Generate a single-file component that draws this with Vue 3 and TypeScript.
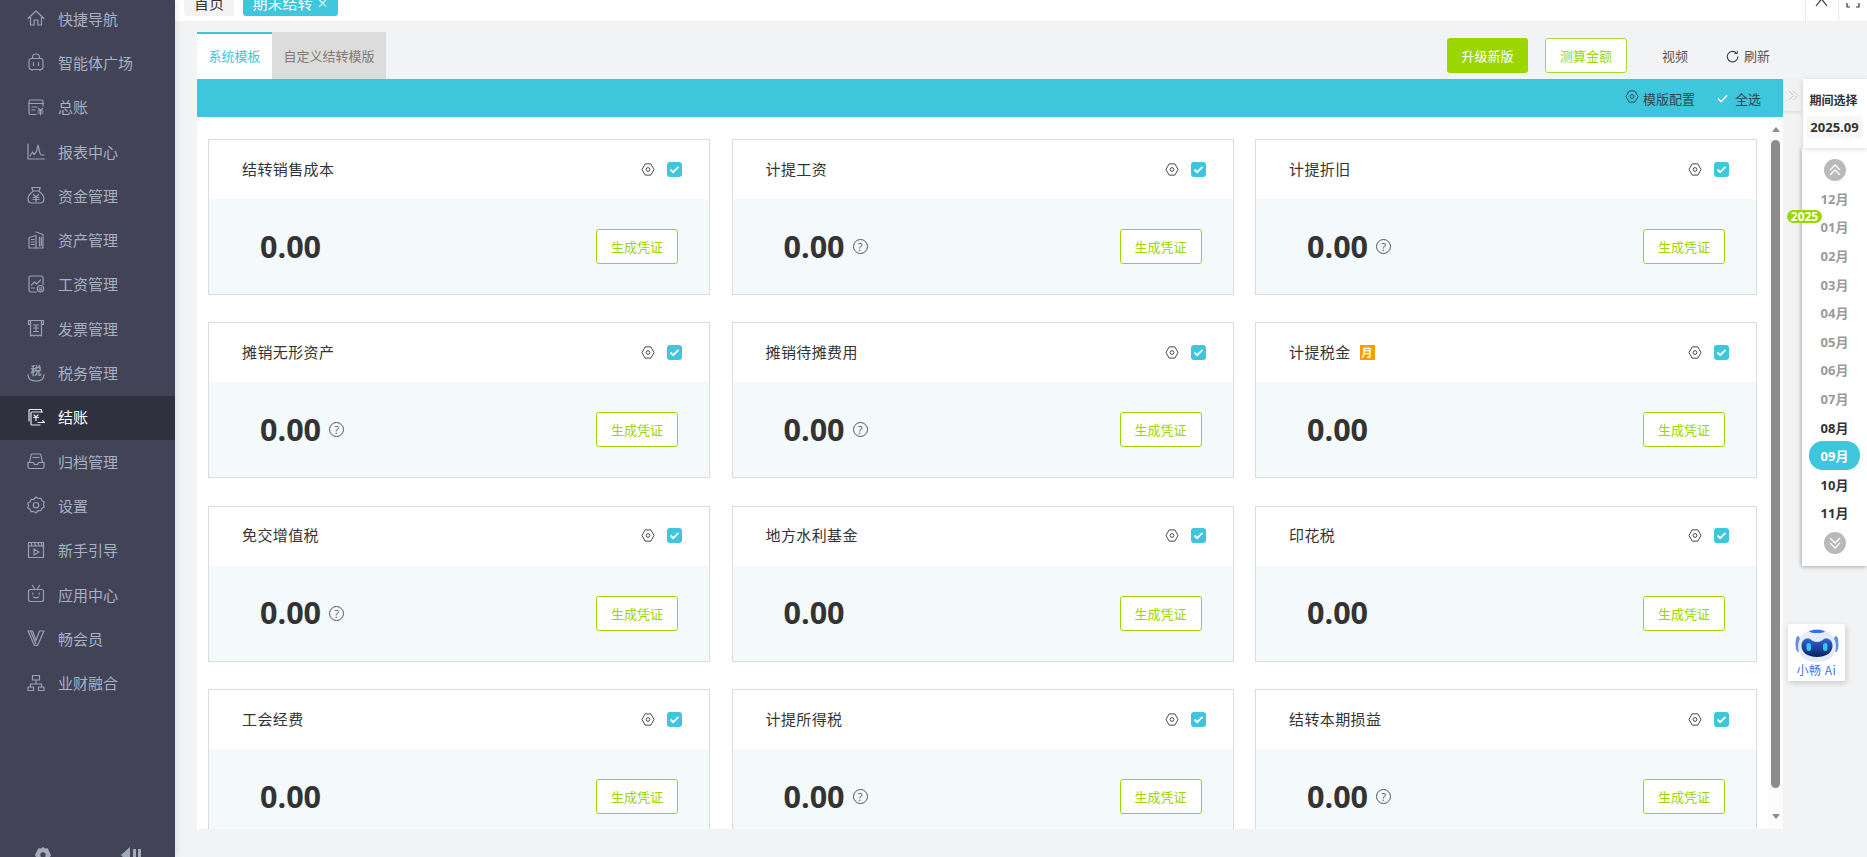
<script setup lang="ts">
interface MenuItem { label: string; paths: string[]; glyph?: string; active?: boolean }
interface Card { title: string; help?: boolean; monthly?: boolean }

const menu: MenuItem[] = [
  { label: '快捷导航', paths: ['M1 9.500 9 2l8 7.500', 'M3.500 8v8h3.600v-5h3.800v5h3.600V8'] },
  { label: '智能体广场', paths: ['M4.500 5.500h9a2.500 2.500 0 0 1 2.500 2.500v6a2.500 2.500 0 0 1-2.500 2.500h-9A2.500 2.500 0 0 1 2 14V8a2.500 2.500 0 0 1 2.500-2.500z', 'M5.500 5.500V4a3.500 3 0 0 1 7 0v1.500', 'M6.500 9.500v3M11.500 9.500v3', 'M5 16.500v1M13 16.500v1'] },
  { label: '总账', paths: ['M16 8V3.500A1.500 1.500 0 0 0 14.500 2h-11A1.500 1.500 0 0 0 2 3.500V15a1.500 1.500 0 0 0 1.500 1.500H9', 'M2 5.500h14', 'M5 9h5M5 12h3', 'M11.500 10.500l2 2 2-2M11 13h5M11 15h5M13.500 12.500v4.500'] },
  { label: '报表中心', paths: ['M1 2v15h16.500', 'M3 14l2.500-4 1.500 2.500 2.500-3L11 3l2 8.500 1 1.500h3'] },
  { label: '资金管理', paths: ['M6 5 4.800 1.500h8.400L12 5z', 'M6 5.500C3 7.500 1 10 1 13c0 2.500 1.500 4 4 4h8c2.500 0 4-1.500 4-4 0-3-2-5.500-5-7.500', 'M6.500 8.500 9 11l2.500-2.500M6 11.500h6M6 13.500h6M9 11v4.500'] },
  { label: '资产管理', paths: ['M2 6.500l7-2v12.500H2z', 'M9 1l7 2.500V17H9', 'M4.300 8.500h1M6.300 8.500h1M4.300 11h1M6.300 11h1M4.300 13.500h1M6.300 13.500h1', 'M12.500 6v9M14.300 6.500v8.500'] },
  { label: '工资管理', paths: ['M9.500 17H3.500A1.500 1.500 0 0 1 2 15.500v-13A1.500 1.500 0 0 1 3.500 1h11A1.500 1.500 0 0 1 16 2.500v7', 'M4.500 10l3-3 2 2 4-4', 'M4.500 13h3', 'M13.500 10.500a3.200 3.200 0 1 1 0 6.400 3.200 3.200 0 0 1 0-6.400zM12 13h3M12 14.800h3'] },
  { label: '发票管理', paths: ['M1.500 1.500h15v4h-2V1.500M1.500 1.500v4h2V1.500', 'M3.500 1.500v15.500l2-1 1.500 1 2-1 2 1 1.500-1 2 1V1.500', 'M6.500 6h5M6.500 9h5M6.500 12.500h5M9 6v6.500'] },
  { label: '税务管理', glyph: '税', paths: ['M1 10.500c0 4 3 6.500 8 6.500s8-2.500 8-6.500'] },
  { label: '结账', active: true, paths: ['M14.500 4V2.500a1 1 0 0 0-1-1H3a1 1 0 0 0-1 1V13', 'M15.500 4H5a1 1 0 0 0-1 1v11a1 1 0 0 0 1 1h8', 'M7 7l2 2 2-2M6.500 9.500h5M9 9v3.500', 'M11 14.500h6.500l-2-2'] },
  { label: '归档管理', paths: ['M1 10.500V15a1.500 1.500 0 0 0 1.500 1.500h13A1.500 1.500 0 0 0 17 15v-4.500', 'M1 10.500h5.500l1 2h3l1-2H17', 'M2.500 10.500 4 3a1.500 1.500 0 0 1 1.500-1h7A1.500 1.500 0 0 1 14 3l1.500 7.500', 'M6 5.500h6'] },
  { label: '设置', paths: ['M9 1l2.200 1.500 2.600-.2 1.200 2.400 2.200 1.300-.700 2.500.700 2.500-2.200 1.300-1.200 2.400-2.600-.2L9 17l-2.200-1.500-2.600.2L3 13.300 .800 12l.700-2.500L.800 7 3 5.700 4.200 3.300l2.600.2z', 'M9 6.500a2.700 2.700 0 1 1 0 5.400 2.700 2.700 0 0 1 0-5.400z'] },
  { label: '新手引导', paths: ['M1.500 1.500h15v15h-15z', 'M1.500 5h15', 'M4 1.500l1 3.500M7.500 1.500l1 3.500M11 1.500l1 3.500M14 1.500l1 3.500', 'M7 8v6l5-3z'] },
  { label: '应用中心', paths: ['M3.500 4.500h11a2 2 0 0 1 2 2v8a2 2 0 0 1-2 2h-11a2 2 0 0 1-2-2v-8a2 2 0 0 1 2-2z', 'M5.500.500 8 4.500M12.500.500 10 4.500', 'M5.800 8v1.200M12.200 8v1.200', 'M6.500 12c1 1.200 4 1.200 5 0'] },
  { label: '畅会员', paths: ['M1 2h4.500L9 11.500 12.500 2H17L10.500 16.500h-3z', 'M3.500 2 9 15'] },
  { label: '业财融合', paths: ['M5.500 1.500h7v4.500h-7z', 'M9 6v4M3.500 13v-3h11v3', 'M1 13h5.500v3.500H1zM11.500 13H17v3.500h-5.500z'] }
]

const cards: Card[] = [
  { title: '结转销售成本' },
  { title: '计提工资', help: true },
  { title: '计提折旧', help: true },
  { title: '摊销无形资产', help: true },
  { title: '摊销待摊费用', help: true },
  { title: '计提税金', monthly: true },
  { title: '免交增值税', help: true },
  { title: '地方水利基金' },
  { title: '印花税' },
  { title: '工会经费' },
  { title: '计提所得税', help: true },
  { title: '结转本期损益', help: true }
]

const months = [
  { label: '12月', state: 'past' },
  { label: '01月', state: 'past' },
  { label: '02月', state: 'past' },
  { label: '03月', state: 'past' },
  { label: '04月', state: 'past' },
  { label: '05月', state: 'past' },
  { label: '06月', state: 'past' },
  { label: '07月', state: 'past' },
  { label: '08月', state: 'open' },
  { label: '09月', state: 'current' },
  { label: '10月', state: 'open' },
  { label: '11月', state: 'open' }
]

// hexagonal cog outline shared by the card and toolbar gear icons
const gearOuter = 'M5.200 2.500h7.600L17 10l-4.200 7.500H5.200L1 10z'
</script>

<template>
  <div class="app">
    <aside class="side">
      <nav class="menu">
        <div v-for="item in menu" :key="item.label" class="menu-item" :class="{ active: item.active }">
          <svg class="menu-icon" viewBox="0 0 18 18" fill="none" stroke="currentColor" stroke-width="1.200" stroke-linecap="round" stroke-linejoin="round">
            <path v-for="d in item.paths" :key="d" :d="d" />
            <text v-if="item.glyph" x="9" y="10.500" text-anchor="middle" font-size="11" font-weight="700" fill="currentColor" stroke="none">{{ item.glyph }}</text>
          </svg>
          <span>{{ item.label }}</span>
        </div>
      </nav>
      <div class="side-foot">
        <svg class="foot-gear" viewBox="0 0 18 18">
          <path fill="#a3abb8" fill-rule="evenodd" d="M9 0l2.400 1.700 2.900-.3 1.300 2.700L18 9l-2.400 4.900-1.300 2.700-2.900-.3L9 18l-2.400-1.700-2.900.3-1.300-2.700L0 9l2.400-4.900 1.300-2.700 2.900.3zM9 6a3 3 0 1 0 0 6 3 3 0 0 0 0-6z" />
        </svg>
        <svg class="foot-fold" viewBox="0 0 20 18">
          <path fill="#a3abb8" d="M0 8l9-8v18zM12 2h3v16h-3zM17 2h3v16h-3z" />
        </svg>
      </div>
    </aside>

    <main class="main">
      <header class="topbar">
        <div class="open-tab">首页</div>
        <div class="open-tab current">期末结转 <span class="tab-x">×</span></div>
        <div class="top-tools">
          <div class="top-tool">
            <svg viewBox="0 0 14 14" fill="none" stroke="#333" stroke-width="1.200"><path d="M1 13 12 -1M12 13 1 -1" transform="translate(0 -7)" /></svg>
          </div>
          <div class="top-tool">
            <svg viewBox="0 0 14 14" fill="none" stroke="#333" stroke-width="1.200"><path d="M1 3v4h3M13 3v4h-3" /></svg>
          </div>
        </div>
      </header>

      <div class="workspace">
        <section class="center">
          <div class="tab-row">
            <div class="tab selected">系统模板</div>
            <div class="tab">自定义结转模版</div>
            <div class="actions">
              <button class="btn solid">升级新版</button>
              <button class="btn outline">测算金额</button>
              <span class="link video">视频</span>
              <span class="link refresh">
                <svg viewBox="0 0 14 14" fill="none" stroke="#444" stroke-width="1.200"><path d="M11.500 3.500A5.700 5.700 0 1 0 12.800 7" /><path d="M9 3.800h3.200V.8" stroke-width="1" /></svg>
                刷新
              </span>
            </div>
          </div>

          <div class="toolbar">
            <span class="tool">
              <svg viewBox="0 0 18 20" fill="none" stroke="#2c4a55" stroke-width="1.300" stroke-linejoin="round"><path :d="gearOuter" /><circle cx="9" cy="10" r="2.500" /></svg>
              模版配置
            </span>
            <span class="tool select-all">
              <svg viewBox="0 0 12 10" fill="none" stroke="#fff" stroke-width="1.600"><path d="M1 5l3.500 3.500L11 1.500" /></svg>
              全选
            </span>
          </div>

          <div class="panel">
            <div class="cards">
              <article v-for="card in cards" :key="card.title" class="card">
                <div class="card-head">
                  <span class="card-title">{{ card.title }}</span>
                  <span v-if="card.monthly" class="monthly">月</span>
                  <svg class="card-gear" viewBox="0 0 18 20" fill="none" stroke="#444" stroke-width="1.300" stroke-linejoin="round">
                    <path :d="gearOuter" />
                    <circle cx="9" cy="10" r="2.500" />
                  </svg>
                  <span class="check">
                    <svg viewBox="0 0 12 10" fill="none" stroke="#fff" stroke-width="2"><path d="M1.500 5l3 3L10.500 2" /></svg>
                  </span>
                </div>
                <div class="card-body">
                  <span class="amount">0.00</span>
                  <span v-if="card.help" class="help">?</span>
                  <button class="voucher">生成凭证</button>
                </div>
              </article>
            </div>
            <div class="track">
              <i class="arrow up"></i>
              <div class="thumb"></div>
              <i class="arrow down"></i>
            </div>
          </div>
        </section>

        <aside class="rail">
          <div class="rail-top">
            <div class="handle">
              <svg viewBox="0 0 12 12" fill="none" stroke="#c4c7cc" stroke-width="1"><path d="M1 1l5 5-5 5M6 1l5 5-5 5" /></svg>
            </div>
            <div class="period">
              <div class="period-title">期间选择</div>
              <div class="period-value">2025.09</div>
            </div>
          </div>
          <div class="timeline">
            <span class="year">2025</span>
            <div class="round">
              <svg viewBox="0 0 14 14" fill="none" stroke="#fff" stroke-width="1.300"><path d="M2 7l5-5 5 5M2 12l5-5 5 5" /></svg>
            </div>
            <div class="month-list">
              <div v-for="m in months" :key="m.label" class="month" :class="m.state">{{ m.label }}</div>
            </div>
            <div class="round">
              <svg viewBox="0 0 14 14" fill="none" stroke="#fff" stroke-width="1.300"><path d="M2 2l5 5 5-5M2 7l5 5 5-5" /></svg>
            </div>
          </div>
          <div class="ai">
            <svg class="ai-bot" viewBox="0 0 44 35">
              <defs>
                <linearGradient id="visor" x1="0" y1="0" x2="0" y2="1">
                  <stop offset="0" stop-color="#2f63d8" />
                  <stop offset="1" stop-color="#0d2160" />
                </linearGradient>
              </defs>
              <ellipse cx="3" cy="16" rx="2.500" ry="8" fill="#5f8fe8" />
              <ellipse cx="41" cy="16" rx="2.500" ry="8" fill="#5f8fe8" />
              <path d="M22 1c12 0 19 8 19 18 0 10-9 15-19 15S3 29 3 19C3 9 10 1 22 1z" fill="#e4ebfa" />
              <path d="M14 3.500C17 1 27 1 30 3.500 27 5.500 17 5.500 14 3.500z" fill="#2f6fe8" />
              <path d="M22 14c-3 0-4.500-1-7-3-4-1.500-8 1-8.500 6-.5 7 5.500 12 15.500 12s16-5 15.500-12c-.5-5-4.500-7.500-8.500-6-2.500 2-4 3-7 3z" fill="url(#visor)" />
              <rect x="11.500" y="15" width="4.500" height="8" rx="2.200" fill="#33c6f7" />
              <rect x="28" y="15" width="4.500" height="8" rx="2.200" fill="#33c6f7" />
            </svg>
            <span class="ai-label">小畅 Ai</span>
          </div>
        </aside>
      </div>
    </main>
  </div>
</template>

<style>
html, body { margin: 0; padding: 0; overflow: hidden; }
</style>

<style scoped>
.app {
  display: flex;
  width: 1867px;
  height: 857px;
  overflow: hidden;
  background: #f2f3f5;
  font-family: "Noto Sans CJK SC", "Open Sans", sans-serif;
  color: #333;
}
.side {
  position: relative;
  z-index: 2;
  flex: none;
  display: flex;
  flex-direction: column;
  width: 175px;
  height: 857px;
  overflow: hidden;
  background: #424356;
  box-shadow: 2px 0 6px rgba(0, 0, 0, 0.08);
}
.menu { margin-top: -3px; }
.menu-item {
  display: flex;
  align-items: center;
  gap: 13px;
  box-sizing: border-box;
  height: 44.300px;
  padding: 0 0 2px 27px;
  font-size: 15px;
  color: #a6b1c1;
}
.menu-item.active { background: #2f313e; color: #fff; }
.menu-icon { width: 18px; height: 18px; color: #9aa1ae; flex: none; overflow: visible; }
.menu-item.active .menu-icon { color: #e4e6ea; }
.side-foot {
  display: flex;
  justify-content: space-between;
  height: 10px;
  margin-top: auto;
  padding: 0 34px 0 35px;
}
.foot-gear { width: 16px; height: 16px; flex: none; }
.foot-fold { width: 20px; height: 18px; flex: none; }

.main { flex: 1; min-width: 0; display: flex; flex-direction: column; }
.topbar {
  flex: none;
  display: flex;
  height: 21px;
  padding-left: 9px;
  background: #fff;
  overflow: hidden;
  gap: 9px;
}
.open-tab {
  flex: none;
  display: flex;
  align-items: center;
  justify-content: center;
  gap: 4px;
  width: 50px;
  height: 28px;
  margin-top: -12px;
  border-radius: 3px;
  background: #f2f3f5;
  font-size: 15px;
  color: #333;
}
.open-tab.current { width: 95px; background: #3ec6dd; color: #fff; }
.tab-x { font-size: 12px; }
.top-tools { display: flex; margin-left: auto; }
.top-tool {
  width: 33px;
  height: 21px;
  border-left: 1px solid #ececec;
  box-sizing: border-box;
  display: flex;
  justify-content: center;
}
.top-tool:last-child { width: 29px; }
.top-tool svg { width: 14px; height: 14px; }

.workspace { flex: 1; min-height: 0; display: flex; }
.center {
  width: 1586px;
  flex: none;
  margin-left: 22px;
  padding-top: 11px;
  display: flex;
  flex-direction: column;
  height: 808px;
  box-sizing: border-box;
}
.tab-row { flex: none; display: flex; height: 47px; }
.tab {
  width: 114px;
  box-sizing: border-box;
  display: flex;
  align-items: center;
  justify-content: center;
  background: #dcdcdc;
  font-size: 13px;
  color: #837b74;
}
.tab.selected {
  width: 75px;
  background: #fff;
  color: #3ec6dd;
  border-top: 2px solid #3ec6dd;
  padding-bottom: 2px;
}
.actions { flex: 1; display: flex; align-items: flex-start; padding-top: 6px; padding-left: 1061px; }
.btn {
  box-sizing: border-box;
  width: 81px;
  height: 35px;
  border-radius: 3px;
  font-family: inherit;
  font-size: 13px;
  padding: 0;
}
.btn.solid { background: #9bd600; border: none; color: #fff; }
.btn.outline { width: 82px; margin-left: 17px; background: #fff; border: 1px solid #a6dc2f; color: #9bd600; }
.link { font-size: 13px; color: #555; line-height: 35px; height: 34px; }
.video { margin-left: 35px; }
.refresh { display: flex; align-items: center; gap: 5px; margin-left: 38px; }
.refresh svg { width: 13px; height: 13px; margin-top: 2px; }

.toolbar {
  flex: none;
  display: flex;
  justify-content: flex-end;
  align-items: center;
  gap: 22px;
  height: 38px;
  padding-right: 22px;
  box-sizing: border-box;
  background: #3ec6dd;
}
.tool { display: flex; align-items: center; gap: 4px; font-size: 13px; color: #2f4651; }
.tool svg { width: 14px; height: 15px; margin-top: -3px; }
.select-all { gap: 7px; }
.select-all svg { width: 11px; height: 9px; margin-top: 0; }

.panel { flex: 1; min-height: 0; display: flex; background: #fff; overflow: hidden; }
.cards {
  flex: none;
  width: 1571px;
  height: 712px;
  box-sizing: border-box;
  padding: 22px 0 0 11px;
  display: grid;
  grid-template-columns: repeat(3, 502px);
  grid-auto-rows: 156px;
  gap: 27.400px 21.500px;
  overflow: hidden;
}
.card {
  box-sizing: border-box;
  border: 1px solid #dcdcdc;
  display: flex;
  flex-direction: column;
}
.card-head {
  flex: none;
  box-sizing: border-box;
  height: 59px;
  display: flex;
  align-items: center;
  padding: 0 27px 1px 33px;
}
.card-title { font-size: 15px; letter-spacing: .4px; color: #333; margin-bottom: 2px; }
.monthly {
  display: inline-flex;
  align-items: center;
  justify-content: center;
  width: 15px;
  height: 15px;
  margin-left: 9px;
  background: #ff9d00;
  color: #fff;
  font-size: 11px;
  font-weight: 700;
}
.card-gear { width: 14px; height: 15px; margin-left: auto; }
.check {
  flex: none;
  display: flex;
  align-items: center;
  justify-content: center;
  width: 15px;
  height: 15px;
  margin-left: 12px;
  border-radius: 3px;
  background: #3ec6dd;
}
.check svg { width: 11px; height: 9px; }
.card-body {
  flex: 1;
  display: flex;
  align-items: center;
  padding: 0 31px 0 51px;
  background: #f4f9fb;
}
.amount { font-family: "Open Sans", sans-serif; font-size: 30.500px; font-weight: 700; color: #333; margin-bottom: 2px; }
.help {
  display: inline-flex;
  align-items: center;
  justify-content: center;
  width: 15px;
  height: 15px;
  box-sizing: border-box;
  margin-left: 8px;
  border: 1px solid #555;
  border-radius: 50%;
  font-family: "Open Sans", sans-serif;
  font-size: 11px;
  line-height: 1;
  color: #555;
}
.voucher {
  box-sizing: border-box;
  width: 82px;
  height: 35px;
  margin-left: auto;
  padding: 0;
  background: #fff;
  border: 1px solid #9bd600;
  border-radius: 3px;
  font-family: inherit;
  font-size: 13px;
  color: #9bd600;
}
.track {
  flex: none;
  width: 15px;
  height: 712px;
  display: flex;
  flex-direction: column;
  align-items: center;
  background: #fcfcfc;
}
.arrow { display: block; width: 0; height: 0; border-left: 4.500px solid transparent; border-right: 4.500px solid transparent; }
.arrow.up { margin-top: 10px; border-bottom: 5px solid #8c8c8c; }
.arrow.down { margin-top: 26px; border-top: 5px solid #8c8c8c; }
.thumb { width: 9px; height: 648px; margin-top: 8px; border-radius: 5px; background: #8c8c8c; }

.rail { flex: none; width: 84px; padding-top: 58px; display: flex; flex-direction: column; position: relative; }
.rail-top { display: flex; height: 69px; }
.handle {
  width: 20px;
  height: 32px;
  background: #f0f1f2;
  box-shadow: 0 2px 3px rgba(0, 0, 0, 0.08);
  display: flex;
  align-items: center;
  justify-content: center;
}
.handle svg { width: 11px; height: 11px; }
.period {
  flex: 1;
  background: #fff;
  box-shadow: 0 1px 5px rgba(0, 0, 0, 0.15);
  padding-top: 10px;
  position: relative;
  z-index: 1;
}
.period-title { width: 61px; text-align: center; font-size: 12px; font-weight: 700; color: #333; line-height: 22px; }
.period-value {
  width: 55px;
  margin: 5px 0 0 4px;
  text-align: center;
  background: #f7f7f7;
  font-family: "Open Sans", sans-serif;
  font-size: 13px;
  font-weight: 700;
  line-height: 22px;
  color: #333;
}
.timeline {
  position: relative;
  width: 65px;
  height: 418px;
  margin-left: 19px;
  background: #fff;
  box-shadow: -1px 1px 4px rgba(0, 0, 0, 0.3);
  display: flex;
  flex-direction: column;
  align-items: center;
  padding-top: 11px;
  box-sizing: border-box;
}
.year {
  position: absolute;
  left: -15px;
  top: 62px;
  width: 35px;
  height: 13px;
  border-radius: 7px;
  background: #9bd600;
  color: #fff;
  font-family: "Open Sans", sans-serif;
  font-size: 12px;
  font-weight: 700;
  line-height: 13px;
  text-align: center;
}
.round {
  flex: none;
  width: 22px;
  height: 22px;
  border-radius: 50%;
  background: #b9b9b9;
  display: flex;
  align-items: center;
  justify-content: center;
}
.round svg { width: 14px; height: 14px; }
.month-list { width: 100%; margin: 3px 0 5px; }
.month {
  width: 51px;
  height: 28.600px;
  margin: 0 auto;
  display: flex;
  align-items: center;
  justify-content: center;
  font-family: "Open Sans", "Noto Sans CJK SC", sans-serif;
  font-size: 13px;
  font-weight: 700;
}
.month.past { color: #9a9a9a; }
.month.open { color: #333; }
.month.current { color: #fff; background: #3ec6dd; border-radius: 14px; }
.ai {
  width: 57px;
  height: 57px;
  margin: 58px 0 0 5px;
  background: #fff;
  box-shadow: 1px 2px 6px rgba(0, 0, 0, 0.18);
  display: flex;
  flex-direction: column;
  align-items: center;
  position: relative;
  z-index: 1;
}
.ai-bot { width: 44px; height: 35px; margin-top: 4px; flex: none; }
.ai-label { font-size: 12px; line-height: 14px; color: #4a70f0; letter-spacing: .5px; white-space: nowrap; }
</style>
